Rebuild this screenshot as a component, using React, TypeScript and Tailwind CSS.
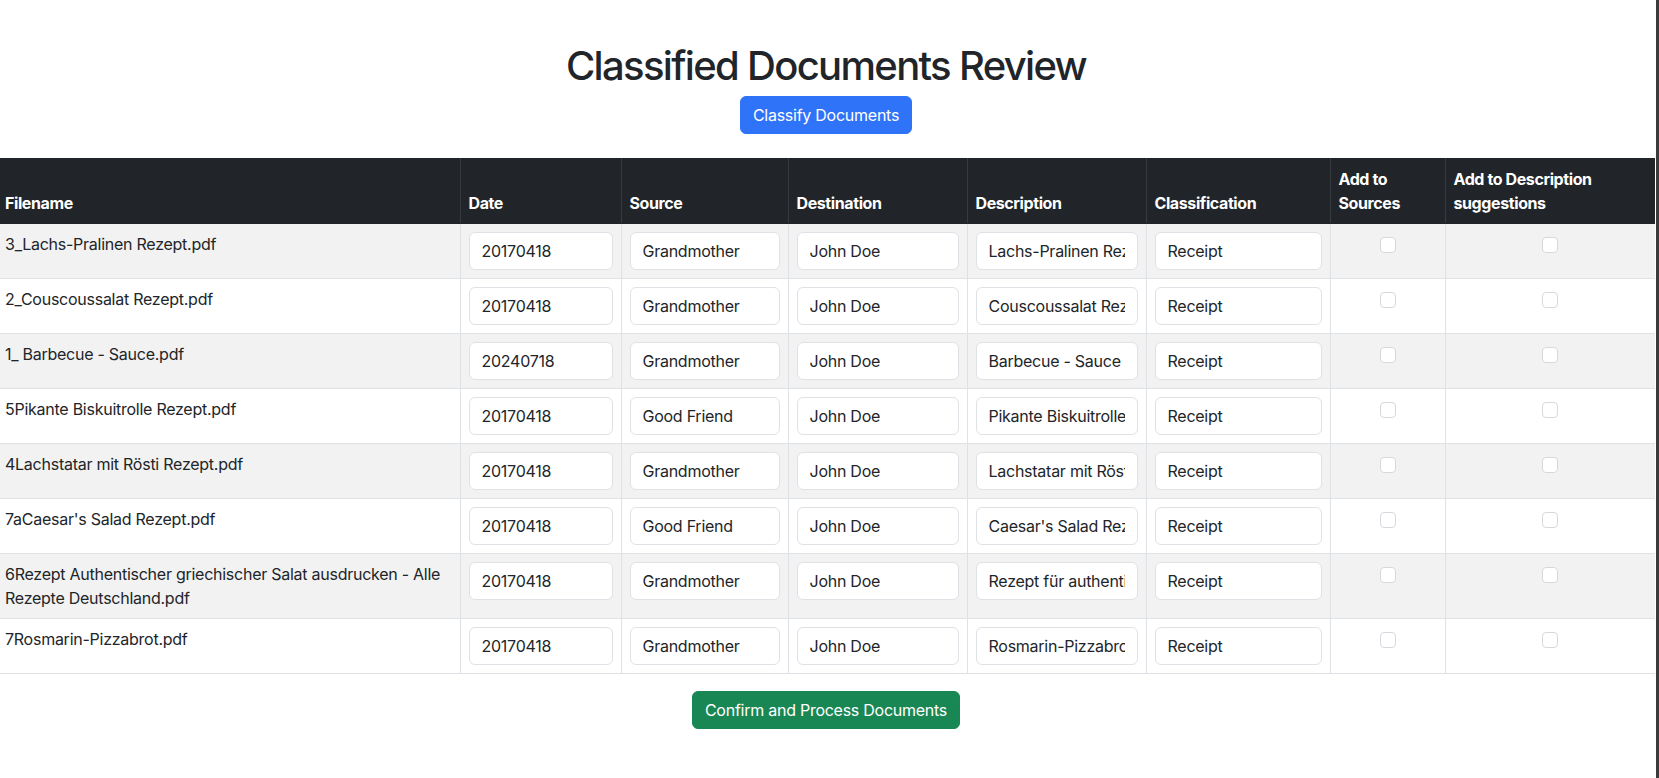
import { useState } from 'react'

type Doc = {
  filename: string
  date: string
  source: string
  destination: string
  description: string
  classification: string
}

const docs: Doc[] = [
  { filename: '3_Lachs-Pralinen Rezept.pdf', date: '20170418', source: 'Grandmother', destination: 'John Doe', description: 'Lachs-Pralinen Rezept', classification: 'Receipt' },
  { filename: '2_Couscoussalat Rezept.pdf', date: '20170418', source: 'Grandmother', destination: 'John Doe', description: 'Couscoussalat Rezept', classification: 'Receipt' },
  { filename: '1_ Barbecue - Sauce.pdf', date: '20240718', source: 'Grandmother', destination: 'John Doe', description: 'Barbecue - Sauce Rezept', classification: 'Receipt' },
  { filename: '5Pikante Biskuitrolle Rezept.pdf', date: '20170418', source: 'Good Friend', destination: 'John Doe', description: 'Pikante Biskuitrolle Rezept', classification: 'Receipt' },
  { filename: '4Lachstatar mit Rösti Rezept.pdf', date: '20170418', source: 'Grandmother', destination: 'John Doe', description: 'Lachstatar mit Rösti Rezept', classification: 'Receipt' },
  { filename: "7aCaesar's Salad Rezept.pdf", date: '20170418', source: 'Good Friend', destination: 'John Doe', description: "Caesar's Salad Rezept", classification: 'Receipt' },
  { filename: '6Rezept Authentischer griechischer Salat ausdrucken - Alle Rezepte Deutschland.pdf', date: '20170418', source: 'Grandmother', destination: 'John Doe', description: 'Rezept für authentischen griechischen Salat', classification: 'Receipt' },
  { filename: '7Rosmarin-Pizzabrot.pdf', date: '20170418', source: 'Grandmother', destination: 'John Doe', description: 'Rosmarin-Pizzabrot Rezept', classification: 'Receipt' },
]

const headers = ['Filename', 'Date', 'Source', 'Destination', 'Description', 'Classification', 'Add to Sources', 'Add to Description suggestions']

const inputCls =
  'block h-[38px] w-full rounded-[6px] border border-[#dee2e6] bg-white px-3 py-[6px] text-base leading-6 text-[#212529] outline-none focus:border-[#86b7fe]'

const checkCls =
  'mt-[5px] h-4 w-4 appearance-none rounded-[4px] border border-[#d5d9dd] bg-white align-top checked:border-[#0d6efd] checked:bg-[#0d6efd]'

function Field({ value }: { value: string }) {
  return <input type="text" defaultValue={value} className={inputCls} />
}

export default function App() {
  const [checks, setChecks] = useState<Record<string, boolean>>({})

  const toggle = (key: string) => setChecks((c) => ({ ...c, [key]: !c[key] }))

  return (
    <div
      className="flex min-h-screen w-full bg-white tracking-[-0.016em] text-[#212529]"
      style={{ fontFamily: 'Inter, "Liberation Sans", sans-serif' }}
    >
      <div className="flex-1 overflow-hidden">
        <div className="-ml-[3px] w-[1658px]">
          <div className="flex flex-col items-center pt-[42px]">
            <h1 className="mb-[6px] text-[40px] font-medium leading-[48px] tracking-[-0.042em]">Classified Documents Review</h1>
            <button
              type="button"
              className="h-[38px] rounded-[6px] border border-[#2f73f8] bg-[#2f73f8] px-3 text-base leading-6 text-white"
            >
              Classify Documents
            </button>
          </div>

          <table className="mt-6 w-full table-fixed border-collapse text-base leading-6">
            <colgroup>
              <col className="w-[463px]" />
              <col className="w-[161px]" />
              <col className="w-[167px]" />
              <col className="w-[179px]" />
              <col className="w-[179px]" />
              <col className="w-[184px]" />
              <col className="w-[115px]" />
              <col className="w-[210px]" />
            </colgroup>
            <thead className="bg-[#212529] text-white">
              <tr className="h-[65px] align-bottom">
                {headers.map((h, i) => (
                  <th
                    key={h}
                    className={`border-b border-[#212529] p-2 text-left font-bold tracking-[-0.025em] ${i > 0 ? 'border-l border-l-[#373b3e]' : ''}`}
                  >
                    {h}
                  </th>
                ))}
              </tr>
            </thead>
            <tbody>
              {docs.map((d, i) => (
                <tr key={d.filename} className={`align-top ${i % 2 === 0 ? 'bg-[#f2f2f2]' : 'bg-white'}`}>
                  <td className="border-b border-[#dee2e6] p-2">{d.filename}</td>
                  <td className="border-b border-l border-[#dee2e6] p-2">
                    <Field value={d.date} />
                  </td>
                  <td className="border-b border-l border-[#dee2e6] p-2">
                    <Field value={d.source} />
                  </td>
                  <td className="border-b border-l border-[#dee2e6] p-2">
                    <Field value={d.destination} />
                  </td>
                  <td className="border-b border-l border-[#dee2e6] p-2">
                    <Field value={d.description} />
                  </td>
                  <td className="border-b border-l border-[#dee2e6] p-2">
                    <Field value={d.classification} />
                  </td>
                  <td className="border-b border-l border-[#dee2e6] p-2 text-center">
                    <input
                      type="checkbox"
                      checked={!!checks[`s${i}`]}
                      onChange={() => toggle(`s${i}`)}
                      className={checkCls}
                    />
                  </td>
                  <td className="border-b border-l border-[#dee2e6] p-2 text-center">
                    <input
                      type="checkbox"
                      checked={!!checks[`d${i}`]}
                      onChange={() => toggle(`d${i}`)}
                      className={checkCls}
                    />
                  </td>
                </tr>
              ))}
            </tbody>
          </table>

          <div className="mt-[17px] flex justify-center">
            <button
              type="button"
              className="h-[38px] rounded-[6px] border border-[#198754] bg-[#198754] px-3 text-base leading-6 text-white"
            >
              Confirm and Process Documents
            </button>
          </div>
        </div>
      </div>
      <div className="ml-px w-[3px] bg-[#3b3b3b]" />
    </div>
  )
}
